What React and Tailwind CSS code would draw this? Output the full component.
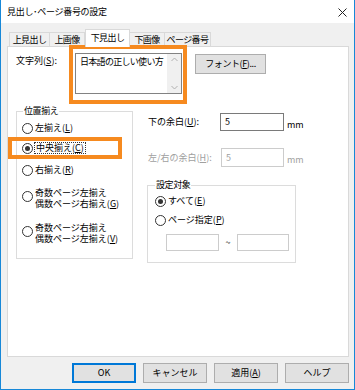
import React from "react";

const Radio = ({ checked }) => (
  <span className="relative block w-[11px] h-[11px] shrink-0 rounded-full border border-[#333333] bg-white">
    {checked && <span className="absolute left-[2px] top-[2px] w-[5px] h-[5px] rounded-full bg-[#333333]" />}
  </span>
);

const Btn = ({ children, primary }) => (
  <div
    className={
      "w-[64px] h-[20px] flex items-center justify-center bg-[#e1e1e1] text-black " +
      (primary ? "border-2 border-[#0078d7]" : "border border-[#adadad]")
    }
  >
    {children}
  </div>
);

export default function App() {
  return (
    <div className="w-[355px] h-[390px] flex flex-col bg-[#f0f0f0] border-x border-b border-[#1788d8] font-['Noto_Sans_CJK_JP',sans-serif] text-[9px] leading-[12px] text-black">
      {/* title bar */}
      <div className="h-[23px] bg-white flex items-center justify-between pl-[6px] pr-[7px] shrink-0">
        <span className="tracking-[-0.3px]">見出し･ページ番号の設定</span>
        <svg width="9" height="9" viewBox="0 0 9 9" className="mt-[1px]">
          <path d="M0.5 0.5 L8.5 8.5 M8.5 0.5 L0.5 8.5" stroke="#222" strokeWidth="1" />
        </svg>
      </div>

      {/* body */}
      <div className="flex-1 flex flex-col pl-[6px] pr-[5px]">
        {/* tabs */}
        <div className="h-[23px] flex items-end pl-[2px] tracking-[-0.6px]">
          <div className="w-[41px] h-[14px] flex items-center justify-center bg-[#f0f0f0] border border-b-0 border-[#d9d9d9]">上見出し</div>
          <div className="w-[35px] h-[14px] flex items-center justify-center bg-[#f0f0f0] border border-b-0 border-l-0 border-[#d9d9d9]">上画像</div>
          <div className="relative z-10 -mb-px w-[45px] h-[18px] flex items-center justify-center bg-white border border-b-0 border-[#d9d9d9] pb-[1px]">下見出し</div>
          <div className="w-[35px] h-[14px] flex items-center justify-center bg-[#f0f0f0] border border-b-0 border-l-0 border-[#d9d9d9]">下画像</div>
          <div className="w-[46px] h-[14px] flex items-center justify-center bg-[#f0f0f0] border border-b-0 border-l-0 border-[#d9d9d9]">ページ番号</div>
        </div>

        {/* panel */}
        <div className="relative w-[342px] h-[311px] bg-white border border-[#d9d9d9]">
          {/* row 1 */}
          <div className="flex mt-[6px] pl-[8px]">
            <div className="w-[59px] pt-[2px]">文字列(<span className="underline">S</span>):</div>
            <div className="relative w-[107px] h-[41px] border border-[#828282] flex">
              <div className="flex-1 pl-[4px] pt-[2px] tracking-[-0.7px]">日本語の正しい使い方</div>
              <div className="w-[14px] bg-[#f0f0f0] flex flex-col items-center justify-between py-[3px]">
                <svg width="7" height="5" viewBox="0 0 7 5"><path d="M0.5 4 L3.5 1 L6.5 4" fill="none" stroke="#b0b0b0" /></svg>
                <svg width="7" height="5" viewBox="0 0 7 5"><path d="M0.5 1 L3.5 4 L6.5 1" fill="none" stroke="#b0b0b0" /></svg>
              </div>
              <div className="absolute left-[-7px] top-[-9px] w-[118px] h-[59px] border-[4px] border-[#f68a1f]" />
            </div>
            <div className="ml-[13px] mt-[1px] w-[71px] h-[20px] flex items-center justify-center bg-[#e1e1e1] border border-[#adadad] tracking-[-0.4px]">
              フォント(<span className="underline">F</span>)...
            </div>
          </div>

          {/* row 2 */}
          <div className="flex mt-[17px] pl-[8px]">
            {/* 位置揃え group */}
            <div className="relative w-[117px] h-[148px] border border-[#dcdcdc] pl-[5px] pt-[10px] flex flex-col">
              <span className="absolute left-[6px] top-[-7px] bg-white px-[1px] tracking-[-0.4px]">位置揃え</span>
              <div className="flex items-center h-[12px] gap-[2px]">
                <Radio />
                <span>左揃え(<span className="underline">L</span>)</span>
              </div>
              <div className="flex items-center h-[12px] gap-[2px] mt-[8px]">
                <Radio checked />
                <span className="border border-dotted border-[#333] px-[1px] leading-[10px] -ml-[1px]">中央揃え(<span className="underline">C</span>)</span>
              </div>
              <div className="flex items-center h-[12px] gap-[2px] mt-[10px]">
                <Radio />
                <span>右揃え(<span className="underline">R</span>)</span>
              </div>
              <div className="flex items-center gap-[2px] mt-[11px]">
                <span className="mb-[4px]"><Radio /></span>
                <span className="flex flex-col leading-[11px]">
                  <span>奇数ページ左揃え</span>
                  <span>偶数ページ右揃え(<span className="underline">G</span>)</span>
                </span>
              </div>
              <div className="flex items-center gap-[2px] mt-[13px]">
                <span className="mb-[4px]"><Radio /></span>
                <span className="flex flex-col leading-[11px]">
                  <span>奇数ページ右揃え</span>
                  <span>偶数ページ左揃え(<span className="underline">V</span>)</span>
                </span>
              </div>
              <div className="absolute left-[-9px] top-[25px] w-[114px] h-[22px] border-[4px] border-[#f68a1f]" />
            </div>

            {/* right column */}
            <div className="ml-[15px] flex flex-col">
              <div className="flex items-center mt-[2px] h-[18px]">
                <span className="w-[72px]">下の余白(<span className="underline">U</span>):</span>
                <div className="w-[64px] h-[18px] border border-[#7a7a7a] bg-white pl-[4px] flex items-center">5</div>
                <span className="ml-[3px] mt-[5px]">mm</span>
              </div>
              <div className="flex items-center mt-[17px] h-[19px] text-[#a0a0a0]">
                <span className="w-[73px]">左/右の余白(<span className="underline">H</span>):</span>
                <div className="w-[63px] h-[19px] border border-[#cccccc] bg-white pl-[4px] flex items-center">5</div>
                <span className="ml-[3px] mt-[5px]">mm</span>
              </div>

              {/* 設定対象 group */}
              <div className="relative -ml-[1px] mt-[18px] w-[149px] h-[78px] border border-[#dcdcdc] pl-[7px] pt-[9px] flex flex-col">
                <span className="absolute left-[7px] top-[-7px] bg-white px-[1px] tracking-[-0.4px]">設定対象</span>
                <div className="flex items-center h-[12px] gap-[2px]">
                  <Radio checked />
                  <span>すべて(<span className="underline">E</span>)</span>
                </div>
                <div className="flex items-center h-[12px] gap-[2px] mt-[7px]">
                  <Radio />
                  <span>ページ指定(<span className="underline">P</span>)</span>
                </div>
                <div className="flex items-center mt-[8px] ml-[11px]">
                  <div className="w-[53px] h-[17px] border border-[#cccccc] bg-white" />
                  <span className="w-[18px] text-center">~</span>
                  <div className="w-[52px] h-[17px] border border-[#cccccc] bg-white" />
                </div>
              </div>
            </div>
          </div>
        </div>

        {/* buttons */}
        <div className="flex justify-end gap-[7px] mt-[6px]">
          <Btn primary>OK</Btn>
          <Btn>キャンセル</Btn>
          <Btn>適用(<span className="underline">A</span>)</Btn>
          <Btn>ヘルプ</Btn>
        </div>
      </div>
    </div>
  );
}
